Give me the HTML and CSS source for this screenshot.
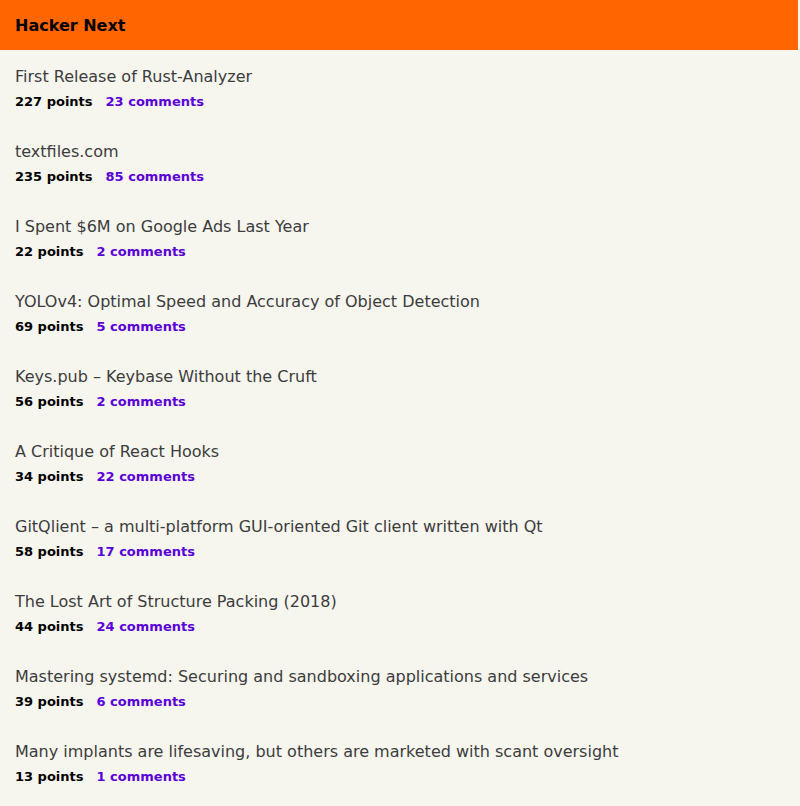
FILE: index.html
```html
<!DOCTYPE html>
<html lang="en">
<head>
<meta charset="utf-8">
<title>Hacker Next</title>
<link rel="stylesheet" href="styles.css">
</head>
<body>
<header class="topbar"><span class="brand">Hacker Next</span></header>
<main class="list">
  <div class="item"><div class="title">First Release of Rust-Analyzer</div><div class="meta"><span class="points">227 points</span><a class="comments" href="#">23 comments</a></div></div>
  <div class="item"><div class="title">textfiles.com</div><div class="meta"><span class="points">235 points</span><a class="comments" href="#">85 comments</a></div></div>
  <div class="item"><div class="title">I Spent $6M on Google Ads Last Year</div><div class="meta"><span class="points">22 points</span><a class="comments" href="#">2 comments</a></div></div>
  <div class="item"><div class="title">YOLOv4: Optimal Speed and Accuracy of Object Detection</div><div class="meta"><span class="points">69 points</span><a class="comments" href="#">5 comments</a></div></div>
  <div class="item"><div class="title">Keys.pub – Keybase Without the Cruft</div><div class="meta"><span class="points">56 points</span><a class="comments" href="#">2 comments</a></div></div>
  <div class="item"><div class="title">A Critique of React Hooks</div><div class="meta"><span class="points">34 points</span><a class="comments" href="#">22 comments</a></div></div>
  <div class="item"><div class="title">GitQlient – a multi-platform GUI-oriented Git client written with Qt</div><div class="meta"><span class="points">58 points</span><a class="comments" href="#">17 comments</a></div></div>
  <div class="item"><div class="title">The Lost Art of Structure Packing (2018)</div><div class="meta"><span class="points">44 points</span><a class="comments" href="#">24 comments</a></div></div>
  <div class="item"><div class="title">Mastering systemd: Securing and sandboxing applications and services</div><div class="meta"><span class="points">39 points</span><a class="comments" href="#">6 comments</a></div></div>
  <div class="item"><div class="title">Many implants are lifesaving, but others are marketed with scant oversight</div><div class="meta"><span class="points">13 points</span><a class="comments" href="#">1 comments</a></div></div>
</main>
</body>
</html>
```
FILE: styles.css
```css
html, body {
  margin: 0;
  padding: 0;
  background: #f6f6ef;
  font-family: "DejaVu Sans", Verdana, sans-serif;
}
.topbar {
  height: 50px;
  margin-right: 2px;
  background: #ff6600;
  display: flex;
  align-items: center;
  padding: 0 15px;
}
.brand {
  font-weight: bold;
  font-size: 16px;
  color: #000;
}
.list {
  padding: 17px 15px 0;
}
.item {
  height: 75px;
}
.title {
  font-size: 16px;
  line-height: 20px;
  color: #3c3c3c;
}
.meta {
  margin-top: 6px;
  font-size: 13px;
  line-height: 17px;
  font-weight: bold;
}
.points {
  color: #000;
  margin-right: 13px;
}
.comments {
  color: #5a00d8;
  text-decoration: none;
}
```
